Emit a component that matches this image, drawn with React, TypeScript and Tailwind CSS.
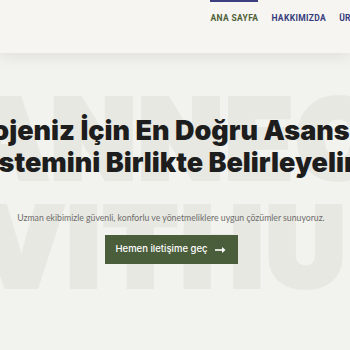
export default function App() {
  return (
    <div className="relative h-[350px] w-[350px] overflow-hidden bg-[#f2f2ee] font-['Inter',sans-serif]">
      <header className="relative z-20 flex h-[53px] items-start justify-end bg-[#f7f5f1] shadow-[0_4px_14px_rgba(0,0,0,0.08)]">
        <nav className="mr-[-29px] flex gap-[13px] font-['Roboto',sans-serif] text-[8.5px] font-bold uppercase tracking-[0.04em]">
          <a className="relative pt-[12px] text-[#4f6238]">
            <span className="absolute left-0 top-0 h-[1.5px] w-full bg-[#3b3f80]" />
            Ana Sayfa
          </a>
          <a className="pt-[12px] text-[#363c7c]">Hakkımızda</a>
          <a className="pt-[12px] text-[#363c7c]">Ürünler</a>
        </nav>
      </header>

      <div className="pointer-events-none absolute inset-x-0 top-[85px] z-0 select-none whitespace-nowrap text-[108px] font-black leading-[108px] text-[#e8e8e3] [-webkit-text-stroke:6px_#e8e8e3]">
        <div className="ml-[-38px] tracking-[4px]">ANNEC</div>
        <div className="ml-[-22px] tracking-[4px]">VITHU</div>
      </div>

      <section className="relative z-10 flex flex-col items-center pr-[8px] pt-[62px]">
        <h1 className="whitespace-nowrap text-center text-[27px] font-black leading-[32px] text-[#1d1d1d]">
          Projeniz İçin En Doğru Asansör
          <br />
          Sistemini Birlikte Belirleyelim
        </h1>
        <p className="mt-[32px] whitespace-nowrap font-['Lato',sans-serif] text-[8.7px] text-[#6d6d6a]">
          Uzman ekibimizle güvenli, konforlu ve yönetmeliklere uygun çözümler sunuyoruz.
        </p>
        <button className="mt-[11px] flex h-[29px] w-[133px] items-center justify-center gap-[8px] bg-[#4a5e3c] text-[9.5px] font-medium text-white">
          Hemen iletişime geç
          <svg width="11" height="8" viewBox="0 0 11 8" fill="none">
            <path d="M0 4h8.5" stroke="white" strokeWidth="1.6" />
            <path d="M7 1l3.5 3L7 7z" fill="white" />
          </svg>
        </button>
      </section>
    </div>
  );
}
